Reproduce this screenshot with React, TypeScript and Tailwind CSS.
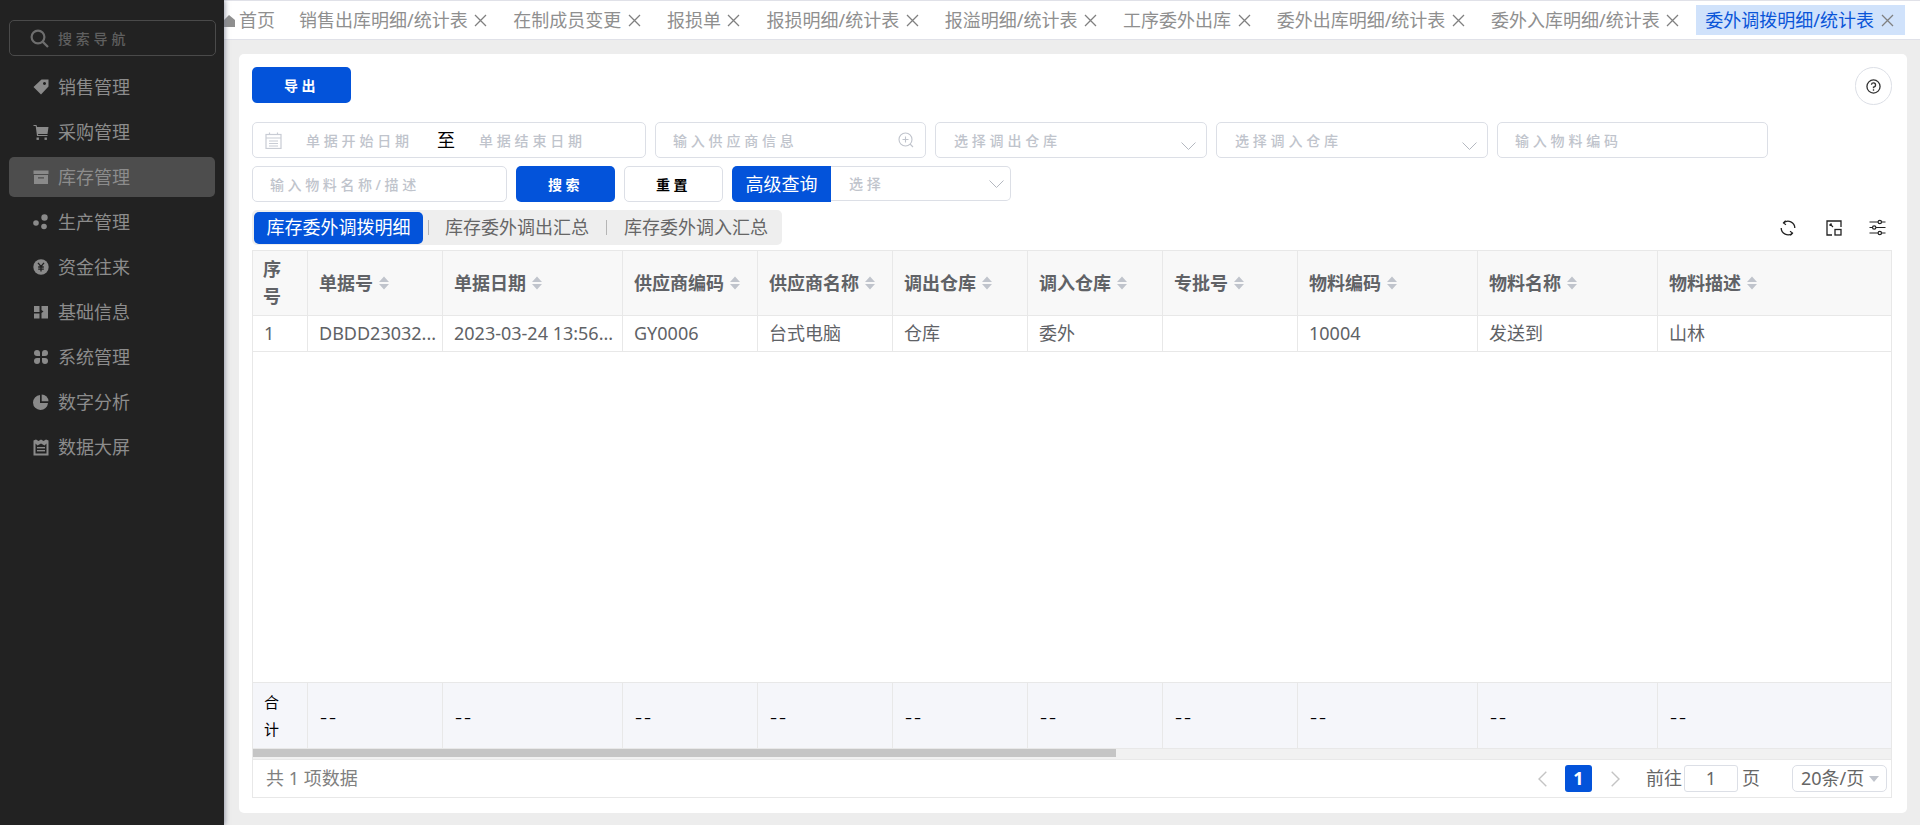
import React from 'react';

const font = { fontFamily: '"Noto Sans", "Noto Sans CJK SC", sans-serif' };

const TagIcon = () => (
  <svg width="16" height="16" viewBox="0 0 16 16" fill="#8a8a8a">
    <path fillRule="evenodd" d="M8.5 0.5 H15.5 V7.5 L8 15.5 L0.5 8 Z M11.5 3 a1.5 1.5 0 1 0 0.01 0 Z" />
  </svg>
);
const CartIcon = () => (
  <svg width="16" height="16" viewBox="0 0 16 16" fill="#8a8a8a">
    <path d="M0.5 1 H3.5 L4 3 H15.5 L14.5 10 H5 L5.2 11 H14.5 V12 H4 L2.7 2 H0.5 Z" />
    <rect x="3.5" y="13.5" width="2.4" height="2.4" />
    <rect x="11.5" y="13.5" width="2.4" height="2.4" />
  </svg>
);
const BoxIcon = () => (
  <svg width="16" height="16" viewBox="0 0 16 16" fill="#8a8a8a">
    <path fillRule="evenodd" d="M0.5 1.5 H15.5 V5 H0.5 Z M1 6 H15 V15 H1 Z M5 8.2 V9.6 H11 V8.2 Z" />
  </svg>
);
const DotsIcon = () => (
  <svg width="16" height="16" viewBox="0 0 16 16" fill="#8a8a8a">
    <circle cx="11.5" cy="3.5" r="3.2" />
    <circle cx="3" cy="9" r="2.8" />
    <circle cx="11" cy="12.5" r="2.8" />
  </svg>
);
const YenIcon = () => (
  <svg width="16" height="16" viewBox="0 0 16 16">
    <circle cx="8" cy="8" r="7.7" fill="#8a8a8a" />
    <path d="M5 3.8 L8 7.5 L11 3.8 M8 7.5 V12.5 M5.2 8 H10.8 M5.2 10.2 H10.8" stroke="#222" strokeWidth="1.3" fill="none" />
  </svg>
);
const BlocksIcon = () => (
  <svg width="16" height="16" viewBox="0 0 16 16" fill="#8a8a8a">
    <path d="M1 2 H6.5 V8 H1 Z M1 9.5 H6.5 V14.5 H1 Z M8.5 2 H15 V14.5 H8.5 V9 L10.5 7.5 L8.5 6 Z" />
  </svg>
);
const LeafIcon = () => (
  <svg width="16" height="16" viewBox="0 0 16 16" fill="#8a8a8a">
    <path d="M4 1 a3 3 0 0 1 3 3 V7 H4 a3 3 0 0 1 0 -6 Z" />
    <path d="M12 1 a3 3 0 0 1 0 6 H9 V4 a3 3 0 0 1 3 -3 Z" />
    <path d="M4 9 H7 V12 a3 3 0 1 1 -3 -3 Z" />
    <path d="M9 9 H12 a3 3 0 1 1 -3 3 Z" />
  </svg>
);
const PieIcon = () => (
  <svg width="16" height="16" viewBox="0 0 16 16" fill="#8a8a8a">
    <path d="M7 1 V9 H15 A7.5 7.5 0 1 1 7 1 Z" />
    <path d="M8.7 0.5 A7 7 0 0 1 15.5 7.3 H8.7 Z" />
  </svg>
);
const BoardIcon = () => (
  <svg width="16" height="17" viewBox="0 0 16 17" fill="#8a8a8a">
    <path fillRule="evenodd" d="M0.5 1.5 L3 0.5 L5.5 2 L8 0.5 L10.5 2 L13 0.5 L15.5 1.5 V16.5 H0.5 Z M2.5 4.5 V14.5 H13.5 V4.5 L11.5 6.5 L8 4.5 L4.5 6.5 Z" />
    <rect x="4" y="8" width="8" height="1.4" />
    <rect x="4" y="11" width="8" height="1.4" />
  </svg>
);

const menu = [
  { label: '销售管理', icon: <TagIcon /> },
  { label: '采购管理', icon: <CartIcon /> },
  { label: '库存管理', icon: <BoxIcon />, active: true },
  { label: '生产管理', icon: <DotsIcon /> },
  { label: '资金往来', icon: <YenIcon /> },
  { label: '基础信息', icon: <BlocksIcon /> },
  { label: '系统管理', icon: <LeafIcon /> },
  { label: '数字分析', icon: <PieIcon /> },
  { label: '数据大屏', icon: <BoardIcon /> },
];

const tabs = [
  '销售出库明细/统计表',
  '在制成员变更',
  '报损单',
  '报损明细/统计表',
  '报溢明细/统计表',
  '工序委外出库',
  '委外出库明细/统计表',
  '委外入库明细/统计表',
];

const columns = ['单据号', '单据日期', '供应商编码', '供应商名称', '调出仓库', '调入仓库', '专批号', '物料编码', '物料名称', '物料描述'];
const row = ['DBDD23032...', '2023-03-24 13:56...', 'GY0006', '台式电脑', '仓库', '委外', '', '10004', '发送到', '山林'];

const gridCols = 'grid grid-cols-[55px_135px_180px_135px_135px_135px_135px_135px_180px_180px_1fr]';

const SortCaret = () => (
  <svg width="10" height="16" viewBox="0 0 10 16" fill="#c0c4cc" className="ml-[6px] shrink-0">
    <path d="M5 1.5 L10 7 H0 Z M0 9 H10 L5 14.5 Z" />
  </svg>
);

const CloseIcon = () => (
  <svg width="13" height="13" viewBox="0 0 13 13" fill="none" stroke="#808080" strokeWidth="1.3" className="ml-[6.6px] shrink-0">
    <path d="M1 1 L12 12 M12 1 L1 12" />
  </svg>
);

const SelectArrow = ({ className }: { className?: string }) => (
  <svg width="15" height="8" viewBox="0 0 15 8" fill="none" stroke="#b4b8c0" strokeWidth="1" className={className}>
    <path d="M0.5 0.5 L7.5 7.5 L14.5 0.5" />
  </svg>
);

const Placeholder = ({ children }: { children: React.ReactNode }) => (
  <span className="text-[14px] font-medium tracking-[3.8px] text-[#c0c4cc] whitespace-nowrap">{children}</span>
);

const Sidebar = () => (
  <div className="relative z-10 flex w-[224px] shrink-0 flex-col bg-[#222222] pt-[20px] shadow-[1px_0_5px_rgba(120,125,145,0.75)]">
    <div className="mx-[9px] flex h-[36px] w-[207px] items-center rounded-[5px] border border-[#4a4a4a] pl-[20px]">
      <svg width="19" height="19" viewBox="0 0 19 19" fill="none" stroke="#6e6e6e" strokeWidth="2.2">
        <circle cx="8" cy="8" r="6.4" />
        <path d="M12.6 12.6 L18 18" />
      </svg>
      <span className="ml-[9px] text-[14px] font-medium tracking-[3.8px] text-[#5f5f5f]">搜索导航</span>
    </div>
    <div className="mt-[11px] flex flex-col gap-[5px]">
      {menu.map(item => (
        <div
          key={item.label}
          className={`mx-[9px] flex h-[40px] w-[206px] items-center rounded-[5px] pl-[24px] ${item.active ? 'bg-[#4d4d4d]' : ''}`}
        >
          {item.icon}
          <span className="ml-[9px] text-[18px] text-[#8c8c8c]">{item.label}</span>
        </div>
      ))}
    </div>
  </div>
);

const TabBar = () => (
  <div className="flex h-[40px] shrink-0 items-center overflow-hidden border-t border-b border-[#e0e1e8] bg-white text-[18px] text-[#8f8f8f] whitespace-nowrap">
    <svg width="11" height="13" viewBox="0 0 11 13" fill="#8f8f8f" className="shrink-0">
      <path d="M0 6 L5 1 L11 6 V13 H0 Z" />
    </svg>
    <span className="ml-[4px] mr-[10px]">首页</span>
    {tabs.map(t => (
      <div key={t} className="ml-[5px] flex h-[30px] items-center pl-[9px] pr-[12px]">
        <span>{t}</span>
        <CloseIcon />
      </div>
    ))}
    <div className="ml-[5px] flex h-[30px] items-center bg-[#d0e2fb] pl-[9px] pr-[11px] text-[#0a55d8]">
      <span>委外调拨明细/统计表</span>
      <CloseIcon />
    </div>
  </div>
);

const Filters = () => (
  <div className="mt-[17px] flex flex-col gap-[8px]">
    <div className="flex">
      <div className="flex h-[36px] w-[394px] items-center rounded-[5px] border border-[#dcdfe6] pl-[12px]">
        <svg width="17" height="17" viewBox="0 0 17 17" fill="none" stroke="#c8ccd4" strokeWidth="1.2">
          <rect x="1" y="2.5" width="15" height="14" />
          <path d="M1 6 H16 M4.5 0.5 V3 M12.5 0.5 V3 M4 9 H13 M4 11.5 H13 M4 14 H13" />
        </svg>
        <span className="ml-[24px] w-[131px]"><Placeholder>单据开始日期</Placeholder></span>
        <span className="w-[42px] text-[18px] text-black">至</span>
        <Placeholder>单据结束日期</Placeholder>
      </div>
      <div className="ml-[9px] flex h-[36px] w-[271px] items-center justify-between rounded-[5px] border border-[#dcdfe6] pl-[17px] pr-[11px]">
        <Placeholder>输入供应商信息</Placeholder>
        <svg width="16" height="16" viewBox="0 0 16 16" fill="none" stroke="#c0c4cc" strokeWidth="1.1">
          <circle cx="7.5" cy="7.5" r="6.5" />
          <path d="M7.5 4.5 V10.5 M4.5 7.5 H10.5 M12 12 L15 15" />
        </svg>
      </div>
      <div className="ml-[9px] flex h-[36px] w-[272px] items-center justify-between rounded-[5px] border border-[#dcdfe6] pl-[18px] pr-[10px]">
        <Placeholder>选择调出仓库</Placeholder>
        <SelectArrow className="mt-[11px]" />
      </div>
      <div className="ml-[9px] flex h-[36px] w-[272px] items-center justify-between rounded-[5px] border border-[#dcdfe6] pl-[18px] pr-[10px]">
        <Placeholder>选择调入仓库</Placeholder>
        <SelectArrow className="mt-[11px]" />
      </div>
      <div className="ml-[9px] flex h-[36px] w-[271px] items-center rounded-[5px] border border-[#dcdfe6] pl-[17px]">
        <Placeholder>输入物料编码</Placeholder>
      </div>
    </div>
    <div className="flex">
      <div className="flex h-[36px] w-[255px] items-center rounded-[5px] border border-[#dcdfe6] pl-[17px]">
        <span className="text-[14px] font-medium tracking-[3.6px] text-[#c0c4cc] whitespace-nowrap">输入物料名称/描述</span>
      </div>
      <button className="ml-[9px] flex h-[36px] w-[99px] items-center justify-center rounded-[5px] bg-[#0353da] text-[14px] font-bold tracking-[3.5px] text-white">
        搜索
      </button>
      <button className="ml-[9px] flex h-[36px] w-[99px] items-center justify-center rounded-[5px] border border-[#dcdfe6] bg-white text-[14px] font-bold tracking-[3.5px] text-black">
        重置
      </button>
      <div className="ml-[9px] flex h-[36px] w-[279px]">
        <div className="flex w-[99px] items-center justify-center rounded-l-[5px] bg-[#0353da] text-[18px] text-white">高级查询</div>
        <div className="flex h-[35px] flex-1 items-center justify-between rounded-r-[5px] border border-l-0 border-[#dcdfe6] pl-[18px] pr-[6px]">
          <Placeholder>选择</Placeholder>
          <SelectArrow />
        </div>
      </div>
    </div>
  </div>
);

const ViewTabs = () => (
  <div className="mt-[8px] flex items-center justify-between">
    <div className="flex h-[35px] items-center rounded-[5px] bg-[#eeeeee] pl-[2px] pr-[14px] text-[18px] text-[#666666]">
      <div className="flex h-[32px] w-[169px] items-center justify-center rounded-[5px] bg-[#0353da] text-white">库存委外调拨明细</div>
      <span className="ml-[5px] h-[15px] w-px bg-[#b5b5b5]" />
      <span className="ml-[16px]">库存委外调出汇总</span>
      <span className="ml-[17px] h-[15px] w-px bg-[#b5b5b5]" />
      <span className="ml-[17px]">库存委外调入汇总</span>
    </div>
    <div className="flex items-center gap-[27px] pr-[6px] text-[#222222]">
      <svg width="16" height="16" viewBox="0 0 16 16" fill="none" stroke="#222" strokeWidth="1.3" className="mr-[3px]">
        <path d="M3.6 2.8 A6.8 6.8 0 0 1 14.8 8 M12.4 13.2 A6.8 6.8 0 0 1 1.2 8" />
        <path d="M5.6 0.6 L3.4 3 L6 4.8 M10.4 15.4 L12.6 13 L10 11.2" strokeWidth="1.1" />
      </svg>
      <svg width="16" height="16" viewBox="0 0 16 16" fill="none" stroke="#222" strokeWidth="1.3">
        <path d="M6 15 H1 V1 H15 V7" />
        <rect x="9" y="9.5" width="6" height="5.5" />
        <path d="M4 4 L7 7 M4 4 H6 M4 4 V6" strokeWidth="1.1" />
      </svg>
      <svg width="17" height="17" viewBox="0 0 17 17" fill="none" stroke="#222" strokeWidth="1.2">
        <path d="M0.5 3 H9 M12.6 3 H16.5 M0.5 8.5 H3.5 M7 8.5 H16.5 M0.5 14 H9 M12.6 14 H16.5" />
        <circle cx="10.8" cy="3" r="1.7" />
        <circle cx="5.2" cy="8.5" r="1.7" />
        <circle cx="10.8" cy="14" r="1.7" />
      </svg>
    </div>
  </div>
);

const DataTable = () => (
  <div className="mt-[5px] flex h-[548px] flex-col border border-[#e8e8e8]">
    <div className="min-h-0 flex-1 overflow-hidden">
      <div className={`${gridCols} h-[65px] border-b border-[#e8e8e8] bg-[#f8f8f8] text-[18px] font-bold text-[#606266]`}>
        <div className="flex items-center border-r border-[#e8e8e8] px-[10px] leading-[27px]">序<br />号</div>
        {columns.map((c, i) => (
          <div key={c} className={`flex items-center pl-[11px] ${i < columns.length - 1 ? 'border-r border-[#e8e8e8]' : ''}`}>
            <span>{c}</span>
            <SortCaret />
          </div>
        ))}
      </div>
      <div className={`${gridCols} h-[36px] border-b border-[#e8e8e8] text-[18px] text-[#606266]`}>
        <div className="flex items-center border-r border-[#e8e8e8] px-[11px]">1</div>
        {row.map((c, i) => (
          <div key={i} className={`flex items-center overflow-hidden pl-[11px] whitespace-nowrap ${i < row.length - 1 ? 'border-r border-[#e8e8e8]' : ''}`}>
            {c}
          </div>
        ))}
      </div>
    </div>
    <div className={`${gridCols} h-[67px] shrink-0 border-t border-b border-[#e8e8e8] bg-[#f5f6fa] text-black`}>
      <div className="flex items-center border-r border-[#e8e8e8] pl-[11px] text-[15px] leading-[27px]">合<br />计</div>
      {columns.map((c, i) => (
        <div key={c} className={`flex items-center pl-[12px] text-[22px] font-light leading-none tracking-[2px] ${i < columns.length - 1 ? 'border-r border-[#e8e8e8]' : ''}`}>
          --
        </div>
      ))}
    </div>
    <div className="h-[10px] shrink-0 bg-[#f1f1f1]">
      <div className="h-[8px] w-[863px] bg-[#c5c5c5]" />
    </div>
    <div className="flex h-[38px] shrink-0 items-center justify-between border-t border-[#e8e8e8] pl-[13px] pr-[4px] text-[18px] text-[#808080]">
      <span>共 1 项数据</span>
      <div className="flex items-center text-[#666666]">
        <svg width="9" height="16" viewBox="0 0 9 16" fill="none" stroke="#c4c4c4" strokeWidth="1.4"><path d="M8.3 0.7 L1 8 L8.3 15.3" /></svg>
        <div className="ml-[18px] flex h-[27px] w-[27px] items-center justify-center rounded-[3px] bg-[#0353da] font-bold text-white">1</div>
        <svg width="9" height="16" viewBox="0 0 9 16" fill="none" stroke="#c4c4c4" strokeWidth="1.4" className="ml-[19px]"><path d="M0.7 0.7 L8 8 L0.7 15.3" /></svg>
        <span className="ml-[26px]">前往</span>
        <div className="ml-[2px] flex h-[27px] w-[54px] items-center justify-center rounded-[3px] border border-[#dcdfe6]">1</div>
        <span className="ml-[4px]">页</span>
        <div className="ml-[32px] flex h-[27px] w-[95px] items-center rounded-[5px] border border-[#dcdfe6] pl-[8px]">
          <span>20条/页</span>
          <svg width="10" height="6" viewBox="0 0 10 6" fill="#c0c4cc" className="ml-[5px]"><path d="M0 0 H10 L5 6 Z" /></svg>
        </div>
      </div>
    </div>
  </div>
);

export default function App() {
  return (
    <div className="flex h-[825px] w-[1920px] overflow-hidden bg-[#ededed]" style={font}>
      <Sidebar />
      <div className="flex min-w-0 flex-1 flex-col">
        <TabBar />
        <div className="ml-[15px] mr-[13px] mt-[14px] h-[759px] rounded-[5px] bg-white pl-[13px] pr-[15px] pt-[13px]">
          <div className="flex items-start justify-between">
            <button className="flex h-[36px] w-[99px] items-center justify-center rounded-[5px] bg-[#0353da] text-[14px] font-bold tracking-[3.5px] text-white">
              导出
            </button>
            <div className="flex h-[38px] w-[37px] items-center justify-center rounded-full border border-[#dcdfe6]">
              <svg width="15" height="15" viewBox="0 0 16 16" fill="none" stroke="#333" strokeWidth="1.4">
                <circle cx="8" cy="8" r="7" />
                <path d="M5.8 6.2 A2.2 2.2 0 1 1 8 8.6 V9.8 M8 11 V12.4" />
              </svg>
            </div>
          </div>
          <Filters />
          <ViewTabs />
          <DataTable />
        </div>
      </div>
    </div>
  );
}
